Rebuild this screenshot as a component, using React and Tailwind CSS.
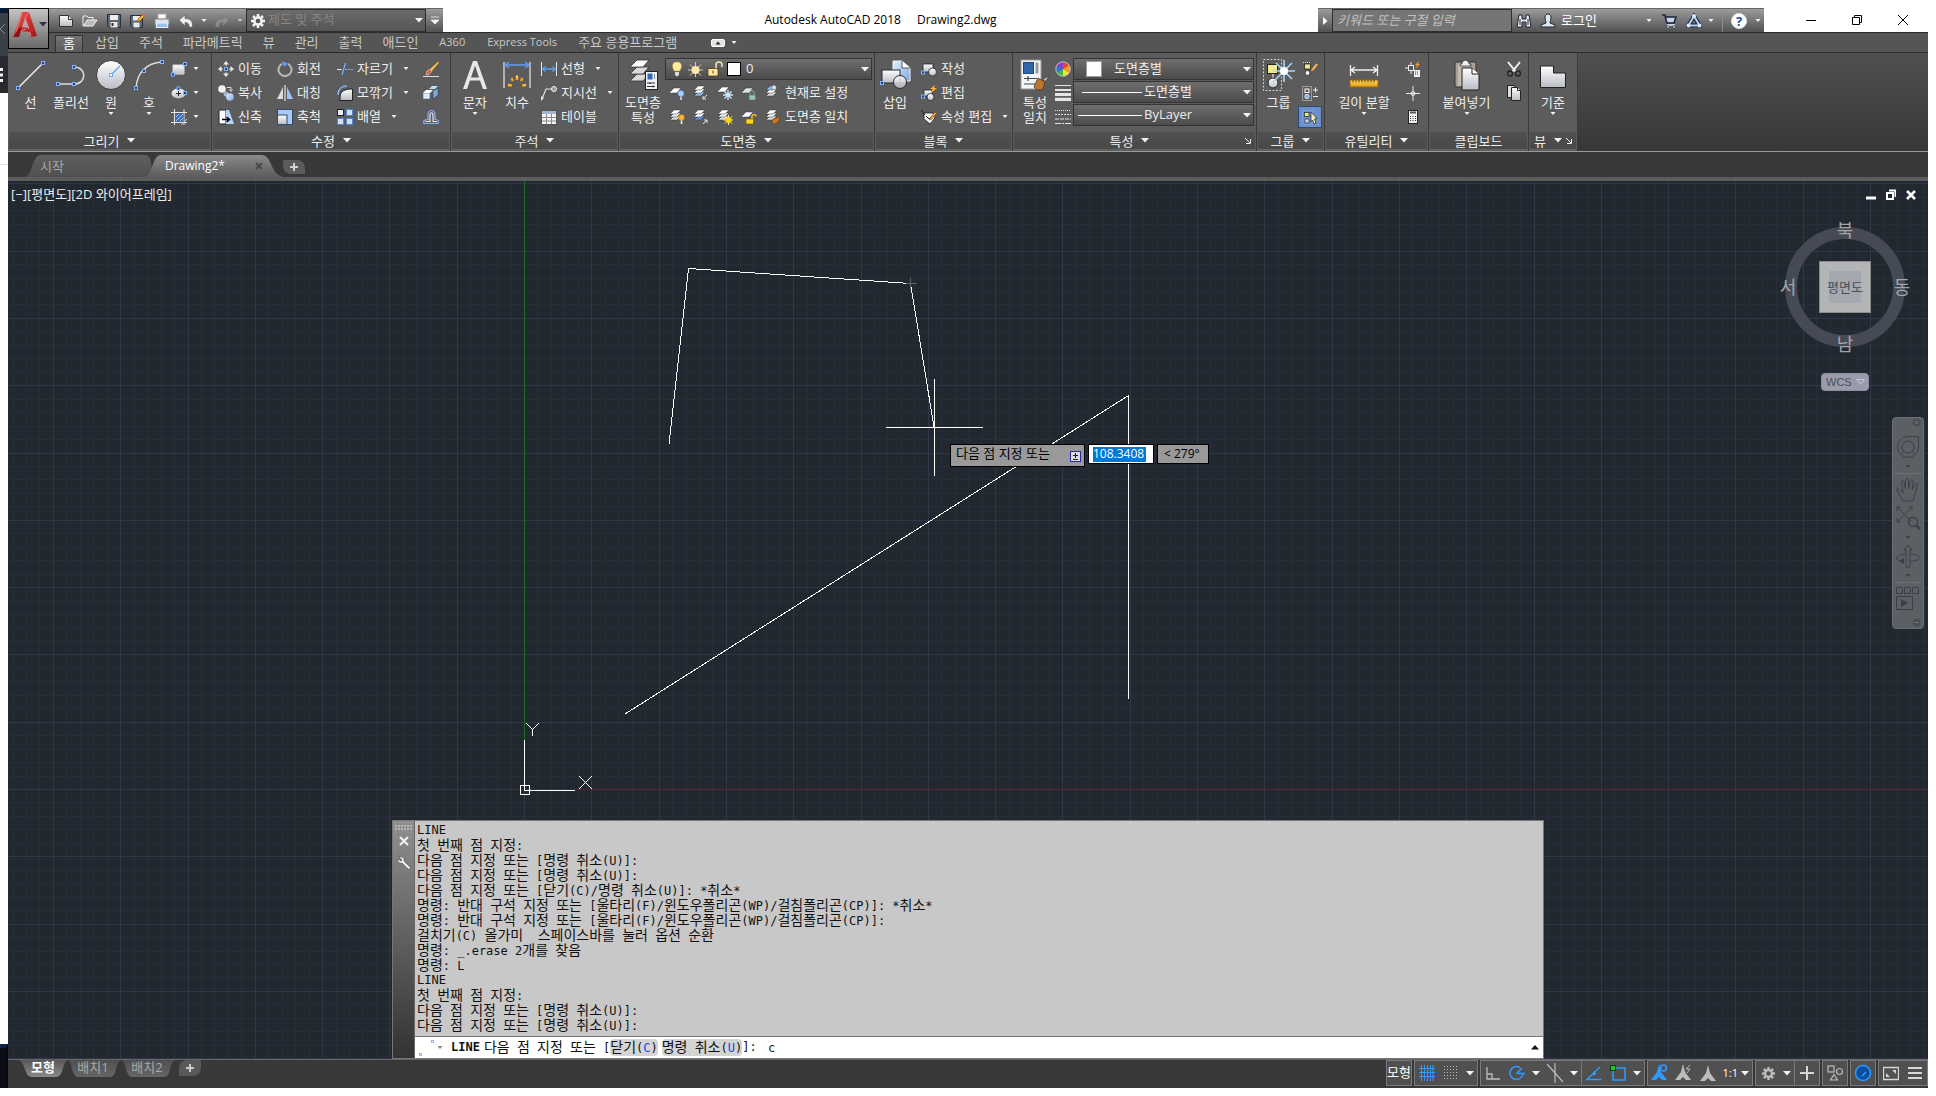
// App.jsx

import { useState } from 'react'

/* ---------- shared drawing bits ---------- */

function Svg({ w = 16, h = w, vb, children }) {
  return (
    <svg width={w} height={h} viewBox={vb || `0 0 ${w} ${h}`} fill="none" aria-hidden="true" className="shrink-0">
      {children}
    </svg>
  )
}

// small blue grip square
function Grip({ x, y }) {
  return <rect x={x - 1.5} y={y - 1.5} width="3" height="3" fill="#27447a" stroke="#84b2ff" />
}

function Caret({ big = false, color = '#f2f2f2' }) {
  return big ? (
    <Svg w={8} h={5}><path d="M0 0h8L4 4.600z" fill={color} /></Svg>
  ) : (
    <Svg w={6} h={4}><path d="M.5 0h5L3 3z" fill={color} /></Svg>
  )
}

// stack of layer sheets, n sheets high
function Sheets({ n = 3, colors = ['#fff', '#f0f0f0', '#dedede'] }) {
  return [...Array(n)].map((_, i) => n - 1 - i).map((i) => (
    <path key={i} d={`M5 ${1 + i * 3}h7l-4 4H1z`} fill={colors[i]} stroke="#333" strokeWidth=".5" />
  ))
}

const Defs = () => (
  <svg width="0" height="0" className="absolute" aria-hidden="true">
    <defs>
      <linearGradient id="silver" x1="0" y1="0" x2="0" y2="1">
        <stop offset="0" stopColor="#fff" />
        <stop offset="1" stopColor="#b9bcc4" />
      </linearGradient>
      <linearGradient id="sky" x1="0" y1="0" x2="1" y2="1">
        <stop offset="0" stopColor="#e3effd" />
        <stop offset="1" stopColor="#7fa9dc" />
      </linearGradient>
      <linearGradient id="red" x1="0" y1="0" x2="1" y2="1">
        <stop offset="0" stopColor="#ef5a50" />
        <stop offset="1" stopColor="#a3141b" />
      </linearGradient>
      <linearGradient id="gold" x1="0" y1="0" x2="0" y2="1">
        <stop offset="0" stopColor="#ffe06a" />
        <stop offset="1" stopColor="#e09a10" />
      </linearGradient>
    </defs>
  </svg>
)

/* ---------- title bar icons ---------- */

const AppLogo = () => (
  <Svg w={24} h={27}>
    <path d="M0 26 9 1h7l8 24-6 1-2-6H8l-2 6z" fill="url(#red)" />
    <path d="M12 7 9 16l7 1z" fill="#a9a9a9" />
    <path d="M9 1 3 22l10-4M16 1l-4 6 6 18" stroke="#ff8a80" strokeWidth=".8" />
    <path d="M8 20l11-3 2 3-5 1z" fill="#c3262a" />
    <path d="M0 26l6-9 3-1-3 10z" fill="#8d1318" />
  </Svg>
)

const QuickIcons = {
  new: <Svg><path d="M1.500 2.500h9l4 4v7h-13z" fill="url(#silver)" stroke="#333" /><path d="M10.500 2.500v4h4" fill="#ddd" stroke="#333" /></Svg>,
  open: <Svg><path d="M1 3h4l1 1.500h5V7" fill="#777" stroke="#f1f1f1" /><path d="M1 13 1 3M1.500 13 5 7h10l-4 6z" fill="#bbb" stroke="#f1f1f1" /></Svg>,
  save: <Svg><path d="M1.500 1.500h13v13h-11l-2-2z" fill="#5d6673" stroke="#25303f" /><rect x="4" y="2" width="8" height="5" fill="#eee" /><rect x="4.500" y="9" width="7" height="5.500" fill="#e8e8e8" /><path d="M5.500 10h2v3h-2z" fill="#333" /></Svg>,
  saveAs: <Svg><path d="M.5 2.500h12v12h-10l-2-2z" fill="#5d6673" stroke="#25303f" /><rect x="3" y="3" width="7" height="4.500" fill="#eee" /><rect x="3.500" y="9.500" width="6" height="5" fill="#e8e8e8" /><path d="m7 9 1-3 5-5 2 2-5 5z" fill="#f7b23c" stroke="#5a3a08" strokeWidth=".6" /><path d="m12 2 2 2 1.500-1.500-2-2z" fill="#e45b4c" /></Svg>,
  print: <Svg><path d="M4 1h8v5H4z" fill="#fff" stroke="#aaa" /><path d="M1 6h14v6H1z" fill="#dfe2e6" stroke="#888" /><path d="M3 10h10l1 4.500H2z" fill="#9cc0ea" stroke="#eef" /></Svg>,
  undo: <Svg><path d="M1 7l6-5v3.500c5 0 8 2 7.500 8.500H11c.3-3-1-4.500-4-4.500V13z" fill="#eceef2" stroke="#444" strokeWidth=".5" /></Svg>,
  redo: <Svg><path d="M15 7 9 2v3.500c-5 0-8 2-7.500 8.500H5c-.3-3 1-4.500 4-4.500V13z" fill="#8c8c8c" stroke="#6b6b6b" strokeWidth=".5" /></Svg>,
}

function Gear({ size = 14, color = '#f1f1f1', hole = '#555' }) {
  return (
    <Svg w={size} vb="0 0 16 16">
      {[0, 45, 90, 135].map((a) => (
        <rect key={a} x="6.500" y="0" width="3" height="16" fill={color} transform={`rotate(${a} 8 8)`} />
      ))}
      <circle cx="8" cy="8" r="5.500" fill={color} />
      <circle cx="8" cy="8" r="2.700" fill={hole} />
    </Svg>
  )
}

const InfoIcons = {
  search: <Svg><path d="M3 2h3v4h4V2h3l2 12h-5V9H6v5H1z" fill="#e7ebf2" stroke="#1d2430" /><path d="M4 6v6M12 6v6" stroke="#1d2430" /></Svg>,
  user: <Svg><path d="M5 4c0-4 6-4 6 0 0 3-1 4-1 6l5 2v2H1v-2l5-2C6 8 5 7 5 4z" fill="#dfe6f2" stroke="#1d2430" /></Svg>,
  cart: <Svg><path d="M1 2h3l1 2h10l-2 6H6L4 3" fill="#c9d6ea" stroke="#16233c" strokeWidth="1.500" /><path d="M6 12h8" stroke="#e8eef7" strokeWidth="1.500" /><circle cx="7" cy="14" r="1.300" fill="#e8eef7" stroke="#16233c" strokeWidth=".6" /><circle cx="13" cy="14" r="1.300" fill="#e8eef7" stroke="#16233c" strokeWidth=".6" /></Svg>,
  a360: <Svg><path d="M8 3 2.500 12.500h11z" stroke="#16233c" strokeWidth="4" /><path d="M8 3 2.500 12.500h11z" stroke="#b9d0f0" strokeWidth="2" /><circle cx="8" cy="3" r="2" fill="#dbe8fa" /><circle cx="2.500" cy="12.500" r="2" fill="#dbe8fa" /><circle cx="13.500" cy="12.500" r="2" fill="#dbe8fa" /></Svg>,
}

/* ---------- ribbon icons ---------- */

const Big = {
  line: <Svg w={32}><path d="M3 29 28 4" stroke="#f0f0f0" strokeWidth="1.500" /><Grip x={3} y={29} /><Grip x={28} y={4} /></Svg>,
  pline: <Svg w={32}><path d="M3 25h16c13 0 13-17 0-17" stroke="#dcdcdc" strokeWidth="1.500" /><Grip x={3} y={25} /><Grip x={19} y={25} /><Grip x={19} y={8} /></Svg>,
  circle: <Svg w={32}><circle cx="16" cy="16" r="14.500" fill="url(#silver)" stroke="#3a3a3a" /><path d="M16 16 25 7" stroke="#6fa4f5" strokeWidth="1.500" /><rect x="14.500" y="14.500" width="3" height="3" fill="#fff" stroke="#6fa4f5" /></Svg>,
  arc: <Svg w={32}><path d="M3 29C4 14 13 4 29 3" stroke="#dcdcdc" strokeWidth="1.500" /><Grip x={3} y={29} /><Grip x={11} y={12} /><Grip x={29} y={3} /></Svg>,
  text: <Svg w={32}><path d="M4 30 14 2h4l10 28h-4l-3-8.500H11L8 30zM12 18.500h8L16 6.500z" fill="#e8e8e8" fillRule="evenodd" /></Svg>,
  dim: (
    <Svg w={32}>
      <path d="M3 3v26M29 3v26" stroke="#e8e8e8" strokeWidth="1.200" />
      <path d="M4 6h24M8 3 4 6l4 3M24 3l4 3-4 3" stroke="#5e9cf5" strokeWidth="1.500" />
      <path d="M16 17v4M10.500 19l1.500 3M21.500 19l-1.500 3M7 26l4 .5M25 26l-4 .5" stroke="#f4a21c" strokeWidth="2.500" />
      <path d="M16 16.500v2M7.500 26h1M24.500 26h-1" stroke="#ffe37a" strokeWidth="2" />
    </Svg>
  ),
  layers: (
    <Svg w={32}>
      {[15, 8, 1].map((y) => (
        <path key={y} d={`M10 ${y}h12l-6 7H3z`} fill={y === 1 ? '#fff' : '#d9d9d9'} stroke="#333" strokeWidth=".8" />
      ))}
      <rect x="18.500" y="12.500" width="12" height="18" fill="#eef1f5" stroke="#222" />
      <rect x="20.500" y="14.500" width="5" height="6" fill="#2e6cc0" />
      <path d="M27.500 15v5" stroke="#888" /><path d="M20 24h8M23 23v2M20 27.500h8M26 26.500v2" stroke="#333" />
    </Svg>
  ),
  insert: (
    <Svg w={32}>
      <path d="M14 2h9l8 7v13H14z" fill="url(#sky)" stroke="#eef4fb" /><path d="M23 2v7h8" fill="#fff" stroke="#333" strokeWidth=".8" />
      <rect x="3" y="11" width="18" height="13" fill="url(#silver)" stroke="#2b2b2b" />
      <circle cx="21" cy="23" r="6.500" fill="url(#silver)" stroke="#2b2b2b" fillOpacity=".85" /><Grip x={3} y={24} />
    </Svg>
  ),
  match: (
    <Svg w={32}>
      <rect x="2" y="1" width="20" height="29" fill="#f3f5f8" stroke="#999" /><rect x="4.500" y="3.500" width="10" height="11" fill="#2f68a8" stroke="#20456f" />
      <rect x="16.500" y="3.500" width="3" height="11" fill="#9b9b9b" /><path d="M5 19.500h13M9 17v5M5 25h13" stroke="#444" strokeWidth="1.200" />
      <path d="M30 17l-6 3 2 3z" fill="#c9c9c9" stroke="#333" strokeWidth=".6" /><path d="M19 19l7 4-2 7c-4 2-8 0-9-2z" fill="#b8772a" stroke="#4a2b07" strokeWidth=".7" />
    </Svg>
  ),
  group: (
    <Svg w={36} h={34}>
      <rect x="2.500" y="1.500" width="18" height="31" stroke="#cfcfcf" strokeDasharray="2 1.500" />
      <path d="M12 12v12" stroke="#fff" /><rect x="6.500" y="6.500" width="10" height="9" fill="#f3ea8c" stroke="#222" />
      <circle cx="12" cy="25" r="5" fill="url(#silver)" stroke="#222" />
      <path d="M23 2v22M12 13h22M15 5l16 16M31 5 12 24" stroke="#a9d6fb" strokeWidth="1.600" />
      <circle cx="23" cy="13" r="4" fill="#fff" />
    </Svg>
  ),
  measure: (
    <Svg w={32}>
      <path d="M2.500 6v11M29.500 6v11M3 11h26M7 8l-4 3 4 3M25 8l4 3-4 3" stroke="#f0f0f0" strokeWidth="1.300" />
      <rect x="2" y="21" width="28" height="7" fill="url(#gold)" stroke="#9c6407" />
      <path d="M5 21v2.500M8 21v2.500M11 21v2.500M14 21v2.500M17 21v2.500M20 21v2.500M23 21v2.500M26 21v2.500" stroke="#6b4504" />
    </Svg>
  ),
  paste: (
    <Svg w={32}>
      <rect x="4" y="3" width="21" height="25" rx="1" fill="#a99f95" stroke="#3b342e" /><rect x="7" y="5" width="12" height="22" fill="#c5bcb3" />
      <path d="M9 5h2c0-5 7-5 7 0h2v2H9z" fill="#f1f1f1" stroke="#333" strokeWidth=".8" />
      <path d="M11 9h10l7 6v16H11z" fill="url(#silver)" stroke="#222" /><path d="M21 9v6h7" fill="#fff" stroke="#222" />
    </Svg>
  ),
  base: <Svg w={32}><path d="M3.500 7h13v7h12v14.500h-25z" fill="url(#silver)" stroke="#222" /></Svg>,
}

const I = {
  rect: <Svg><path d="M2 4h11v9H2z" fill="url(#silver)" stroke="#ddd" /><Grip x={2} y={13.500} /><Grip x={14} y={3} /></Svg>,
  ellipse: <Svg><ellipse cx="7.500" cy="8.500" rx="7" ry="5" fill="url(#silver)" /><path d="M7.500 6v5M5 8.500h5" stroke="#222" /><Grip x={7.500} y={3.500} /><Grip x={14} y={8} /></Svg>,
  hatch: <Svg><path d="M0 3.500h16M0 13.500h16M3.500 0v16M13 0v16" stroke="#e6e6e6" /><rect x="4.500" y="4.500" width="8" height="8" fill="#3f6fb8" /><path d="m5 12 7-7M5 8l3-3M9 12l3-3M10 16l6-6" stroke="#a9c9f7" /></Svg>,
  move: <Svg><path d="m8 0 3 3.500H5zM8 16l3-3.500H5zM0 8l3.500-3v6zM16 8l-3.500-3v6z" fill="#e8e8e8" /><path d="M8 3v2M8 11v2M3 8h2M11 8h2" stroke="#e8e8e8" /><Grip x={8} y={8} /></Svg>,
  copy: <Svg><circle cx="4" cy="4" r="3.800" fill="#f2f2f2" /><circle cx="8" cy="9" r="2.500" fill="#a8b6cb" /><circle cx="12" cy="12" r="3.800" fill="url(#sky)" /><path d="M9 2.500h4v3M11.500 4.500 13 6.500l1.500-2" stroke="#ddd" /></Svg>,
  stretch: <Svg><path d="M1 1h7v14H1z" fill="#fff" stroke="#222" /><path d="M8 1h3l5 14H8z" fill="#b5d3f6" /><path d="M4 10.500h7M8.500 8l3 2.500-3 2.500" stroke="#000" strokeWidth="1.500" /></Svg>,
  rotate: <Svg><path d="M11 2.800A6.500 6.500 0 1 1 5 2.800" stroke="#b8b8b8" strokeWidth="2" /><path d="M5 0l6 2.500L7 6z" fill="#5e9cf5" /></Svg>,
  mirror: <Svg><path d="M6 2v12H0z" fill="#d8dbe0" /><path d="M10 2v12h6z" fill="#9cc3f3" /><path d="M8 0v16" stroke="#fff" /></Svg>,
  scale: <Svg><rect x=".5" y=".5" width="15" height="15" fill="#a9cbf5" stroke="#31486a" /><rect x=".5" y="6" width="9.500" height="9.500" fill="url(#silver)" stroke="#31486a" /></Svg>,
  trim: <Svg><path d="M0 8.500h5M8.500 2 5 14" stroke="#7db1ff" strokeWidth="1.200" /><path d="M0 8.500h4" stroke="#eee" /><path d="M8 8.500h8" stroke="#7db1ff" strokeDasharray="2 1" /></Svg>,
  fillet: <Svg><path d="M3 15.500V12C3 6 8 4 15.500 4v11.500z" fill="url(#silver)" stroke="#222" /><path d="M1 10C1 4 5 1 10 1" stroke="#84b2ff" strokeWidth="1.500" /></Svg>,
  array: <Svg><rect x=".5" y=".5" width="6" height="6" fill="#eee" stroke="#222" /><path d="M9.500.5h6v6h-6zM.5 9.500h6v6h-6zM9.500 9.500h6v6h-6z" fill="#cfe2fb" stroke="#4e86d6" /></Svg>,
  erase: <Svg><path d="M15.500 0 16 2 9 10 7 8z" fill="#f4c95d" stroke="#7b4c0b" strokeWidth=".5" /><path d="M7 8l2 2-3 3.500-3 .5 1-4z" fill="#d8642c" stroke="#fff" strokeWidth=".5" /><path d="M0 15.500h16" stroke="#ddd" /></Svg>,
  explode: <Svg><path d="M0 8h7v6H0z" fill="#dcebfb" stroke="#567" strokeWidth=".6" /><path d="m0 8 3-3h7L7 8z" fill="#fff" /><path d="M10 6l5-3v7l-5 4z" fill="#7fa9dc" stroke="#345" strokeWidth=".6" /><path d="m6 4 3-3h6l-3 3z" fill="#c6dcf6" /></Svg>,
  offset: <Svg><path d="M1 14.500c-1-2 0-4 4-4V6c0-6 7-6 7 0v4.500c4 0 4 2 3 4z" stroke="#84b2ff" strokeWidth="1.200" /><path d="M2.500 12.500H7V6c0-3 3-3 3 0v6.500h4" stroke="#e8e8e8" strokeWidth="1.200" /></Svg>,
  linear: <Svg><path d="M.5 1v14M15.500 1v14" stroke="#e8e8e8" /><path d="M1.500 8h13M4.500 5.500 1.500 8l3 2.500M11.500 5.500l3 2.500-3 2.500" stroke="#5e9cf5" strokeWidth="1.300" /></Svg>,
  leader: <Svg><path d="M1 14 5 4h7" stroke="#e0e0e0" strokeWidth="1.200" /><path d="M0 16V11l3 2z" fill="#e0e0e0" /><circle cx="13" cy="4" r="2.500" fill="#999" stroke="#f1f1f1" /></Svg>,
  table: <Svg><rect x=".5" y="1.500" width="15" height="14" fill="#f4f4f4" stroke="#555" /><path d="M1 2h14v3H1z" fill="#9fb4d0" /><path d="M1 8.500h14M1 12h14M5.500 5v10M10.500 5v10" stroke="#8a8a8a" /></Svg>,
  layOff: <Svg><path d="M5 3h7L8 8H0z" fill="#fff" stroke="#333" strokeWidth=".5" /><circle cx="12" cy="8.500" r="3" fill="#a9d3fb" stroke="#4b86c4" strokeWidth=".6" /><path d="M12 11.500V15" stroke="#cfe6fd" strokeWidth="1.500" /></Svg>,
  layIso: <Svg><Sheets colors={['#fff', '#fff', '#8fc0f5']} /><path d="m14 10-4 4M10 11v3h3" stroke="#e8e8e8" /></Svg>,
  layFreeze: <Svg><path d="M5 2h7L8 7H0z" fill="#fff" stroke="#333" strokeWidth=".5" /><path d="M11 5v10M6 10h10M7.500 6.500l7 7M14.500 6.500l-7 7" stroke="#cfe6fd" strokeWidth="1.300" /></Svg>,
  layLock: <Svg><path d="M5 3h7L8 8H0z" fill="#dbe5e6" stroke="#333" strokeWidth=".5" /><path d="M9 10V7.500c0-2.500 4-2.500 4 0V10" stroke="#8fb3b3" /><rect x="8" y="10" width="6.500" height="5" fill="#9fc0bf" stroke="#496b6b" strokeWidth=".6" /></Svg>,
  layCurrent: <Svg><Sheets colors={['#8fc0f5', '#fff', '#dcdcdc']} /><circle cx="9" cy="2.500" r="2.500" fill="#ddd" stroke="#444" strokeWidth=".5" /></Svg>,
  layOn: <Svg><Sheets /><circle cx="12.500" cy="8.500" r="3" fill="#ffb23a" stroke="#b36b00" strokeWidth=".6" /><path d="M12.500 11.500V15" stroke="#fff" strokeWidth="1.500" /></Svg>,
  layUniso: <Svg><Sheets colors={['#fff', '#fff', '#5d8fe8']} /><path d="m10 15 4-4M11 11h3v3" stroke="#e8e8e8" /></Svg>,
  layThaw: <Svg><Sheets /><path d="M11.500 6v10M6.500 11h10M8 7.500l7 7M15 7.500l-7 7" stroke="#fff3a0" /><circle cx="11.500" cy="11" r="3" fill="#f7d51c" /></Svg>,
  layUnlock: <Svg><path d="M5 3h7L8 8H0z" fill="#fff" stroke="#333" strokeWidth=".5" /><path d="M11 10V7.500c0-2.500 4-2.500 4 0" stroke="#f7d51c" strokeWidth="1.300" /><rect x="5" y="10" width="7.500" height="5" fill="#f7d51c" stroke="#6b5300" strokeWidth=".6" /></Svg>,
  layMatch: <Svg><Sheets /><path d="m8 10 4-1 3-3-1 5-3 4c-2 0-4-1-4-3z" fill="#c9772a" stroke="#5b3108" strokeWidth=".5" /></Svg>,
  blkCreate: <Svg><rect x="2" y="3" width="10" height="8" fill="url(#silver)" stroke="#222" strokeWidth=".8" /><circle cx="11.500" cy="11" r="4" fill="url(#silver)" stroke="#222" strokeWidth=".8" /><Grip x={2} y={11.500} /></Svg>,
  blkEdit: <Svg><rect x="3" y="5" width="8" height="6" fill="url(#silver)" stroke="#222" strokeWidth=".8" /><circle cx="9.500" cy="12" r="3.500" fill="url(#silver)" stroke="#222" strokeWidth=".8" /><Grip x={2} y={11.500} /><path d="m14 0-5 4h2.500L10 8l6-5h-3z" fill="#ffb52e" /></Svg>,
  blkAttr: <Svg><path d="m3 4 9 0 2 5-5 6-6-5z" fill="#f2f2f2" stroke="#222" strokeWidth=".8" /><path d="M0 1l4 5M5 7l3 3 3-3" stroke="#222" /><path d="m9 9 5-6 1.500 1.500L11 10l-2.500 1z" fill="#f4a43c" stroke="#5a3a08" strokeWidth=".5" /></Svg>,
  wheel: (
    <Svg>
      {['#e8452f', '#f29a1f', '#f5e12f', '#43b649', '#2f73d8', '#8a3fc4'].map((c, i) => (
        <path key={c} d="M8 8V1a7 7 0 0 1 6.060 3.500z" fill={c} transform={`rotate(${i * 60} 8 8)`} />
      ))}
      <circle cx="8" cy="8" r="7.200" stroke="#ddd" strokeWidth=".8" />
    </Svg>
  ),
  weights: <Svg><path d="M0 .5h16" stroke="#e4e4e4" /><path d="M0 5h16" stroke="#e4e4e4" strokeWidth="2" /><path d="M0 9.500h16" stroke="#e4e4e4" strokeWidth="3" /><path d="M0 14.500h16" stroke="#e4e4e4" strokeWidth="3.500" /></Svg>,
  types: <Svg><path d="M0 1.500h16" stroke="#e4e4e4" strokeDasharray="1 1" /><path d="M0 5.500h16" stroke="#e4e4e4" strokeDasharray="2 1" /><path d="M0 10h16" stroke="#e4e4e4" strokeDasharray="4 1" /><path d="M0 14.500h16" stroke="#e4e4e4" strokeDasharray="6 1 2 1" /></Svg>,
  grpEdit: <Svg><path d="M1 1.500h8" stroke="#ddd" strokeDasharray="1 1" /><rect x="2.500" y="3" width="6" height="5" fill="#f3ea8c" stroke="#222" strokeWidth=".8" /><circle cx="5.500" cy="12" r="2.500" fill="#eee" stroke="#222" strokeWidth=".8" /><path d="m9 9 5-6.500 2 1L11 10z" fill="#f0b64a" /><path d="m8.500 10.500.5-2L11 10z" fill="#e4573f" /></Svg>,
  grpAdd: <Svg><rect x=".5" y="1.500" width="9" height="14" stroke="#ddd" strokeDasharray="1 1" /><rect x="3" y="4" width="4" height="3.500" stroke="#fff" /><circle cx="5" cy="11.500" r="2.200" fill="#7fb3f5" stroke="#fff" strokeWidth=".7" /><path d="M11 5h5M13.500 2.500v5M11 11.500h5" stroke="#eee" /></Svg>,
  grpPick: <Svg><rect x=".5" y="1.500" width="10" height="14" stroke="#7fb3f5" strokeDasharray="1 1" /><rect x="2.500" y="3.500" width="4.500" height="4" fill="#f3ea8c" stroke="#222" strokeWidth=".7" /><circle cx="5" cy="12" r="2.300" fill="#ccd6e6" stroke="#222" strokeWidth=".7" /><path d="m9 3 6 6.500-2.500.500 1.500 4-2 .7L10.500 11 9 12.500z" fill="#f5efad" stroke="#222" strokeWidth=".7" /></Svg>,
  quickSel: <Svg><path d="M0 7h9M6 1v12" stroke="#eee" /><rect x="3.500" y="4.500" width="5" height="5" fill="#555" stroke="#eee" /><path d="m14 0-4 4h2l-2 4 5-5h-2z" fill="#f59a1f" /><path d="M9 9h6v7H9z" fill="#f0f0f0" /><path d="M10 11h4M10 13h4" stroke="#333" strokeDasharray="1 1" /></Svg>,
  point: <Svg><path d="M8 1v15M1 8.500h14" stroke="#e8e8e8" /><circle cx="8" cy="8.500" r="2" stroke="#e8e8e8" /></Svg>,
  calc: <Svg><rect x="3.500" y="1.500" width="9" height="13" fill="#f1f1f1" stroke="#222" /><path d="M5 3.500h6" stroke="#555" strokeWidth="2" /><path d="M5 7.500h6M5 9.500h6M5 11.500h6" stroke="#333" strokeDasharray="1 1.500" /></Svg>,
  cut: <Svg><path d="m2 1 8 10M14 1 6 11" stroke="#f2f2f2" strokeWidth="2" /><circle cx="4" cy="12.500" r="2.500" stroke="#222" strokeWidth="1.300" /><circle cx="12" cy="12.500" r="2.500" stroke="#222" strokeWidth="1.300" /></Svg>,
  copyClip: <Svg><path d="M1.500.5h7v12h-7z" fill="#ddd" stroke="#222" /><path d="M5.500 2.500h6l3 3v10h-9z" fill="url(#silver)" stroke="#222" /><path d="M11.500 2.500v3h3" fill="#fff" stroke="#222" /></Svg>,
}

/* ---------- controls ---------- */

function LargeButton({ icon, lines, width, arrow = false }) {
  return (
    <button type="button" className={`flex flex-col items-center self-start ${width}`}>
      <span className="flex h-9 items-center justify-center">{icon}</span>
      <span className="mt-0.5 whitespace-nowrap text-[13px] leading-[15px]">
        {lines.map((line) => (
          <span key={line} className="block">{line}</span>
        ))}
      </span>
      {arrow && <span className="mt-0.5"><Caret /></span>}
    </button>
  )
}

function SmallButton({ icon, label, title, arrow = false, width = '', active = false }) {
  return (
    <button
      type="button"
      aria-label={label || title}
      aria-pressed={active || undefined}
      className={`flex h-6 items-center text-[13px] leading-[15px] whitespace-nowrap ${width}`}
    >
      <span className={`flex w-6 shrink-0 items-center justify-center ${active ? 'h-[22px] border border-[#2c4a78] bg-[#6c8fc7]' : 'h-6'}`}>
        {icon}
      </span>
      {label && <span className="pb-0.5">{label}</span>}
      {arrow && <span className={label ? 'ml-2.5' : 'mx-0.5'}><Caret /></span>}
    </button>
  )
}

function Combo({ label, options, pad, children }) {
  return (
    <span className="relative my-px block h-[22px] border border-[#333] bg-linear-to-b from-[#6e6e6e] to-[#4c4c4c]">
      <select aria-label={label} className={`block h-5 w-full appearance-none bg-transparent pb-0.5 text-[13px] leading-[18px] outline-none ${pad}`}>
        {options.map((o) => (
          <option key={o}>{o}</option>
        ))}
      </select>
      <span className="pointer-events-none absolute inset-y-0 left-0 flex items-center">{children}</span>
      <span className="pointer-events-none absolute inset-y-0 right-0.5 flex items-center"><Caret big /></span>
    </span>
  )
}

function Panel({ title, width, arrow = true, launcher = false, children }) {
  return (
    <section aria-label={title} className={`flex shrink-0 flex-col border-r border-[#3a3a3a] bg-[#5c5c5c] ${width}`}>
      <div className="flex h-[79px] px-0.5 pt-1">{children}</div>
      <div className="mx-px flex h-[18px] items-center border-b border-[#646464] bg-linear-to-b from-[#505050] to-[#494949]">
        <button type="button" className="flex flex-1 items-center justify-center gap-2 text-[13px] leading-4">
          {title}
          {arrow && <Caret big />}
        </button>
        {launcher && (
          <button type="button" aria-label={`${title} 설정`} className="mr-1">
            <Svg w={6}><path d="M0 0l5 5M5.500 1v4.500H1" stroke="#eee" /></Svg>
          </button>
        )}
      </div>
    </section>
  )
}

/* ---------- top of the window ---------- */

function QuickAccess() {
  const items = [
    ['new', '새로 만들기'],
    ['open', '열기'],
    ['save', '저장'],
    ['saveAs', '다른 이름으로 저장'],
    ['print', '플롯'],
    ['undo', '명령 취소'],
  ]
  return (
    <div className="flex w-[394px] shrink-0 items-stretch border-t border-[#666] bg-linear-to-b from-[#9c9c9c] to-[#525252] pl-[5px]">
      {items.map(([key, label]) => (
        <button key={key} type="button" aria-label={label} className="flex w-6 items-center justify-center">
          {QuickIcons[key]}
        </button>
      ))}
      <button type="button" aria-label="명령 취소 목록" className="flex w-3 items-center justify-center"><Caret /></button>
      <button type="button" aria-label="명령 복구" className="flex w-6 items-center justify-center">{QuickIcons.redo}</button>
      <button type="button" aria-label="명령 복구 목록" className="flex w-3 items-center justify-center"><Caret color="#c4c4c4" /></button>
      <span className="relative block w-[180px] border border-[#2d2d2d] bg-linear-to-b from-[#6b6b6b] to-[#555]">
        <select aria-label="작업공간" className="block h-[21px] w-full appearance-none bg-transparent pb-0.5 pl-[21px] text-[13px] leading-[19px] text-[#868686] outline-none">
          <option>제도 및 주석</option>
        </select>
        <span className="pointer-events-none absolute inset-y-0 left-1 flex items-center"><Gear /></span>
        <span className="pointer-events-none absolute inset-y-0 right-0.5 flex items-center"><Caret big /></span>
      </span>
      <button type="button" aria-label="신속 접근 도구막대 사용자화" className="flex flex-1 items-center justify-center">
        <Svg w={8} h={9}><path d="M0 1h8M0 4h8L4 8z" fill="#f2f2f2" stroke="#f2f2f2" strokeWidth=".8" /></Svg>
      </button>
    </div>
  )
}

function InfoCenter() {
  return (
    <div className="flex w-[446px] shrink-0 items-stretch border-t border-[#666] bg-linear-to-b from-[#9c9c9c] to-[#525252] text-[13px] text-white">
      <button type="button" aria-label="검색 접기" className="flex w-3.5 items-center justify-center">
        <Svg w={5} h={8}><path d="M0 0v8l4.500-4z" fill="#fff" /></Svg>
      </button>
      <input
        type="text"
        aria-label="검색"
        placeholder="키워드 또는 구절 입력"
        className="w-[180px] border border-[#2d2d2d] bg-[#757575] px-1 pb-0.5 text-[13px] leading-[18px] italic outline-none placeholder:text-[#c0c0c0]"
      />
      <button type="button" aria-label="찾기" className="flex w-6 items-center justify-center">{InfoIcons.search}</button>
      <button type="button" className="flex w-[120px] items-center">
        <span className="flex w-6 justify-center">{InfoIcons.user}</span>
        <span className="pl-px">로그인</span>
        <span className="ml-auto flex w-3.5 justify-center"><Caret /></span>
      </button>
      <button type="button" aria-label="App Store" className="flex w-[26px] items-center justify-center">{InfoIcons.cart}</button>
      <button type="button" aria-label="A360 연결" className="flex w-8 items-center pl-1">{InfoIcons.a360}<span className="ml-1.5"><Caret /></span></button>
      <button type="button" aria-label="도움말" className="ml-2 flex flex-1 items-center border-l border-[#8b8b8b] pl-2">
        <span className="flex size-4 items-center justify-center rounded-full border border-[#dfe6f2] bg-white text-[13px] leading-4 font-bold text-[#1d4fa0]">?</span>
        <span className="ml-2"><Caret /></span>
      </button>
    </div>
  )
}

function WindowButtons() {
  return (
    <div className="flex w-[164px] shrink-0 justify-end bg-white pr-0.5">
      <button type="button" aria-label="최소화" className="flex w-[46px] items-center justify-center">
        <Svg w={10}><path d="M0 5.500h10" stroke="#000" /></Svg>
      </button>
      <button type="button" aria-label="이전 크기로 복원" className="flex w-[46px] items-center justify-center">
        <Svg w={10}><path d="M.5 2.500h7v7h-7zM2.500 2.500v-2h7v7h-2" stroke="#000" /></Svg>
      </button>
      <button type="button" aria-label="닫기" className="flex w-[46px] items-center justify-center">
        <Svg w={10}><path d="m0 0 10 10M10 0 0 10" stroke="#000" /></Svg>
      </button>
    </div>
  )
}

const RIBBON_TABS = ['삽입', '주석', '파라메트릭', '뷰', '관리', '출력', '애드인', 'A360', 'Express Tools', '주요 응용프로그램']

function Header() {
  return (
    <header className="flex h-11 shrink-0 bg-[#555]">
      <button type="button" aria-label="응용프로그램 메뉴" className="flex h-[41px] w-[41px] shrink-0 items-center gap-0.5 border border-black bg-linear-to-b from-[#c4c4c4] to-[#6a6a6a] pb-2 pl-1">
        <AppLogo />
        <Caret big color="#2b3340" />
      </button>
      <div className="flex min-w-0 flex-1 flex-col">
        <div className="flex h-6 bg-white">
          <QuickAccess />
          <h1 className="flex flex-1 items-center justify-center gap-4 text-xs text-black">
            <span>Autodesk AutoCAD 2018</span>
            <span>Drawing2.dwg</span>
          </h1>
          <InfoCenter />
          <WindowButtons />
        </div>
        <nav className="flex h-5 items-end border-t border-[#2b2b2b] pl-1.5 text-[13px] leading-4 text-[#c8c8c8]">
          <button type="button" className="mr-0.5 h-[17px] w-7 border border-b-0 border-[#333] bg-linear-to-b from-[#747474] to-[#5c5c5c] pb-0.5 leading-[14px] text-white">
            홈
          </button>
          {RIBBON_TABS.map((tab) => (
            <button key={tab} type="button" className={`h-[18px] pb-0.5 whitespace-nowrap ${/^[A-Z]/.test(tab) ? 'px-[11px] text-[11px]' : 'px-2.5'}`}>
              {tab}
            </button>
          ))}
          <button type="button" aria-label="리본 최소화" className="ml-6 flex h-[18px] items-center gap-1.5">
            <Svg w={14} h={8}><rect x=".5" y=".5" width="13" height="7" rx="1.500" fill="#e4e4e4" stroke="#fff" /><path d="M4.500 5.500h5L7 2.500z" fill="#222" /></Svg>
            <Caret />
          </button>
        </nav>
      </div>
    </header>
  )
}

function Ribbon() {
  return (
    <div className="flex h-[100px] shrink-0 border-y border-t-[#2b2b2b] border-b-[#9a9a9a] bg-linear-to-b from-[#505050] to-[#373737] text-[#eee]">
      <Panel title="그리기" width="w-[204px]">
        <LargeButton icon={Big.line} lines={['선']} width="w-[41px]" />
        <LargeButton icon={Big.pline} lines={['폴리선']} width="w-10" />
        <LargeButton icon={Big.circle} lines={['원']} width="w-10" arrow />
        <LargeButton icon={Big.arc} lines={['호']} width="w-9" arrow />
        <div>
          <SmallButton icon={I.rect} title="직사각형" arrow />
          <SmallButton icon={I.ellipse} title="타원" arrow />
          <SmallButton icon={I.hatch} title="해치" arrow />
        </div>
      </Panel>

      <Panel title="수정" width="w-[239px]">
        <div className="grid grid-cols-[59px_60px_86px_24px] content-start">
          <SmallButton icon={I.move} label="이동" />
          <SmallButton icon={I.rotate} label="회전" />
          <SmallButton icon={I.trim} label="자르기" arrow />
          <SmallButton icon={I.erase} title="지우기" />
          <SmallButton icon={I.copy} label="복사" />
          <SmallButton icon={I.mirror} label="대칭" />
          <SmallButton icon={I.fillet} label="모깎기" arrow />
          <SmallButton icon={I.explode} title="분해" />
          <SmallButton icon={I.stretch} label="신축" />
          <SmallButton icon={I.scale} label="축척" />
          <SmallButton icon={I.array} label="배열" arrow />
          <SmallButton icon={I.offset} title="간격띄우기" />
        </div>
      </Panel>

      <Panel title="주석" width="w-[168px]">
        <LargeButton icon={Big.text} lines={['문자']} width="w-11" arrow />
        <LargeButton icon={Big.dim} lines={['치수']} width="w-10" />
        <div>
          <SmallButton icon={I.linear} label="선형" arrow />
          <SmallButton icon={I.leader} label="지시선" arrow />
          <SmallButton icon={I.table} label="테이블" />
        </div>
      </Panel>

      <Panel title="도면층" width="w-[256px]">
        <LargeButton icon={Big.layers} lines={['도면층', '특성']} width="w-11" />
        <div className="flex-1">
          <Combo label="도면층" options={['0']} pad="pl-20">
            <span className="flex items-center gap-1 pl-1">
              <Svg w={14} h={16}><path d="M7 1c6 0 5 6 2.500 9h-5C2 7 1 1 7 1z" fill="#ffeb9c" stroke="#c9a63a" strokeWidth=".5" /><path d="M5 11h4v3l-2 1.500L5 14z" fill="#dcdcdc" /></Svg>
              <Svg w={15}><path d="M7.500 0v15M0 8h15M2 2.500l11 11M13 2.500l-11 11" stroke="#d8cfae" /><circle cx="7.500" cy="8" r="4" fill="#ffe9ab" /></Svg>
              <Svg w={16}><path d="M9 8V4c0-4 6-4 6 0v2" stroke="#f3e6b3" strokeWidth="1.500" /><rect x="1" y="7.500" width="10" height="7.500" fill="#ffe9a0" stroke="#4d4010" strokeWidth=".8" /><path d="M6 9.500v3" stroke="#4d4010" /></Svg>
              <span className="size-3.5 border border-black bg-white" />
            </span>
          </Combo>
          <div className="flex">
            <SmallButton icon={I.layOff} title="끄기" />
            <SmallButton icon={I.layIso} title="분리" />
            <SmallButton icon={I.layFreeze} title="동결" />
            <SmallButton icon={I.layLock} title="잠금" />
            <SmallButton icon={I.layCurrent} label="현재로 설정" />
          </div>
          <div className="flex">
            <SmallButton icon={I.layOn} title="모든 도면층 켜기" />
            <SmallButton icon={I.layUniso} title="분리 해제" />
            <SmallButton icon={I.layThaw} title="모든 도면층 동결 해제" />
            <SmallButton icon={I.layUnlock} title="잠금 해제" />
            <SmallButton icon={I.layMatch} label="도면층 일치" />
          </div>
        </div>
      </Panel>

      <Panel title="블록" width="w-[138px]">
        <LargeButton icon={Big.insert} lines={['삽입']} width="w-9" />
        <div className="ml-1">
          <SmallButton icon={I.blkCreate} label="작성" />
          <SmallButton icon={I.blkEdit} label="편집" />
          <SmallButton icon={I.blkAttr} label="속성 편집" arrow />
        </div>
      </Panel>

      <Panel title="특성" width="w-[244px]" launcher>
        <LargeButton icon={Big.match} lines={['특성', '일치']} width="w-10" />
        <div className="flex w-4 flex-col items-center">
          <span className="flex h-6 items-center">{I.wheel}</span>
          <span className="flex h-6 items-center">{I.weights}</span>
          <span className="flex h-6 items-center">{I.types}</span>
        </div>
        <div className="ml-0.5 flex-1">
          <Combo label="객체 색상" options={['도면층별']} pad="pl-10">
            <span className="ml-3 size-4 border border-[#999] bg-white" />
          </Combo>
          <Combo label="선가중치" options={['도면층별']} pad="pl-[70px]">
            <span className="ml-2 h-px w-[60px] bg-white" />
          </Combo>
          <Combo label="선종류" options={['ByLayer']} pad="pl-[70px]">
            <span className="ml-1 h-px w-16 bg-white" />
          </Combo>
        </div>
      </Panel>

      <Panel title="그룹" width="w-[68px]">
        <LargeButton icon={Big.group} lines={['그룹']} width="w-10" />
        <div>
          <SmallButton icon={I.grpEdit} title="그룹 편집" />
          <SmallButton icon={I.grpAdd} title="그룹에서 추가/제거" />
          <SmallButton icon={I.grpPick} title="그룹 선택 켜기/끄기" active />
        </div>
      </Panel>

      <Panel title="유틸리티" width="w-[104px]">
        <LargeButton icon={Big.measure} lines={['길이 분할']} width="w-[74px]" arrow />
        <div>
          <SmallButton icon={I.quickSel} title="신속 선택" />
          <SmallButton icon={I.point} title="ID 점" />
          <SmallButton icon={I.calc} title="계산기" />
        </div>
      </Panel>

      <Panel title="클립보드" width="w-[100px]" arrow={false}>
        <LargeButton icon={Big.paste} lines={['붙여넣기']} width="w-[71px]" arrow />
        <div>
          <SmallButton icon={I.cut} title="잘라내기" />
          <SmallButton icon={I.copyClip} title="복사하기" />
        </div>
      </Panel>

      <Panel title="뷰" width="w-[49px]" launcher>
        <LargeButton icon={Big.base} lines={['기준']} width="w-11" arrow />
      </Panel>
    </div>
  )
}

function FileTabs() {
  return (
    <div className="flex h-[29px] shrink-0 items-end border-b-4 border-[#5c5c5c] bg-[#383838] pl-[17px]">
      <button type="button" className="h-[22px] w-[130px] bg-linear-to-b from-[#5f5f5f] to-[#505050] pl-[15px] text-left text-[13px] leading-5 text-[#a8a8a8] [clip-path:path('M0_22C8_20_7_0_16_0H120C128_0_124_10_130_22Z')]">
        시작
      </button>
      <div className="-ml-2.5 flex h-[22px] w-[138px] items-center bg-linear-to-b from-[#8a8a8a] to-[#5c5c5c] pr-5 pl-5 [clip-path:path('M0_22C8_20_7_0_16_0H116C128_0_124_18_138_22Z')]">
        <button type="button" className="flex-1 text-left text-xs text-white">Drawing2*</button>
        <button type="button" aria-label="Drawing2 닫기">
          <Svg w={8}><path d="m1 1 6 6M7 1 1 7" stroke="#4a4a4a" strokeWidth="2" /></Svg>
        </button>
      </div>
      <button type="button" aria-label="새 도면" className="mb-[3px] flex h-3.5 w-[22px] items-center justify-center rounded-tr-lg rounded-bl-lg bg-[#5c5c5c]">
        <Svg w={8}><path d="M4 0v8M0 4h8" stroke="#d0d0d0" strokeWidth="2" /></Svg>
      </button>
    </div>
  )
}

/* ---------- drawing area ---------- */

const ORIGIN = { x: 516, y: 608 }
const STEP = 67.3 / 5

function Grid() {
  const lines = []
  for (let i = -45; i <= 120; i++) {
    const p = Math.round(ORIGIN.x + i * STEP) + 0.5
    if (p > 0) lines.push({ key: `v${i}`, major: i % 5 === 0, d: `M${p} 0V2000` })
  }
  for (let i = -50; i <= 45; i++) {
    const p = Math.round(ORIGIN.y + i * STEP) + 0.5
    if (p > 0) lines.push({ key: `h${i}`, major: i % 5 === 0, d: `M0 ${p}H4000` })
  }
  // minor lines first so that the major ones stay on top
  lines.sort((a, b) => a.major - b.major)
  return lines.map((l) => <path key={l.key} d={l.d} stroke={l.major ? '#30374a' : '#272e39'} />)
}

function Model() {
  return (
    <svg className="absolute inset-0 h-full w-full" fill="none" aria-label="모형 공간">
      <g shapeRendering="crispEdges">
        <Grid />
        <path d="M516.500 0V559" stroke="#1f6b25" />
        <path d="M567 608.500H4000" stroke="#5c2830" />
      </g>
      <g stroke="#fff" shapeRendering="crispEdges">
        <path d="M661 263.500 680.500 87.500 902.500 102.500 926 246" />
        <path d="M617 533 1120.500 214.500V518" />
        <path d="M878 246.500H975M926.500 198V295" />
        <path d="M516.500 559V609.500H567M512.500 604.500h9v9h-9z" />
        <path d="M518 542l6.500 6.500L531 542M524.500 548v7M571 595l13 13M584 595l-13 13" />
      </g>
      <path d="M898 102.500h11M902.500 97v11" stroke="#5d666b" />
    </svg>
  )
}

function DynamicInput() {
  return (
    <div className="absolute top-[263px] left-[942px] flex items-start gap-[3px] text-[13px] leading-4 text-black">
      <label htmlFor="distance" className="flex h-[23px] w-[135px] items-start border border-black bg-[#999] pl-[5px]">
        다음 점 지정 또는
        <span className="mt-1.5 mr-[3px] ml-auto flex size-[11px] items-center justify-center border border-[#2a2aa0] bg-[#dcdcdc]">
          <Svg w={7}><path d="M3.500 0v5M1 2.500h5M1 6.500h5" stroke="#222" /></Svg>
        </span>
      </label>
      <span className="flex h-5 w-[66px] items-center border border-black bg-white pl-1">
        <input id="distance" readOnly value="108.3408" className="h-[15px] w-[53px] bg-[#0078d7] text-xs text-white outline-none" />
      </span>
      <span className="flex h-5 w-[52px] items-center border border-black bg-[#999] pl-1.5 text-xs">&lt; 279°</span>
    </div>
  )
}

function ViewCube() {
  return (
    <div className="absolute top-10 right-[17px] flex flex-col items-center">
      <div className="relative grid h-[132px] w-[132px] grid-cols-[18px_1fr_18px] grid-rows-[18px_1fr_18px] place-items-center text-lg leading-none text-[#a5a6a8]">
        <div className="absolute inset-1.5 rounded-full border-[12px] border-[#454a54]" />
        <span className="relative col-start-2">북</span>
        <span className="relative col-start-1 row-start-2">서</span>
        <button type="button" className="relative col-start-2 row-start-2 flex size-[52px] items-center justify-center border border-[#8b8b8b] bg-[#b3b4b5] text-[13px] text-[#4a4f57]">
          <span className="flex size-8 items-center justify-center bg-[#a3a9af] whitespace-nowrap">평면도</span>
        </button>
        <span className="relative col-start-3 row-start-2">동</span>
        <span className="relative col-start-2 row-start-3">남</span>
      </div>
      <button type="button" className="mt-5 flex h-[18px] w-12 items-center gap-1 rounded-sm border border-[#8d8f9c] bg-[#9a9cab] pl-1 font-['Liberation_Sans',sans-serif] text-[11px] text-[#4c4f58]">
        WCS
        <Svg w={9} h={6}><path d="M.5.5h8l-4 4.500z" stroke="#c9cad2" /></Svg>
      </button>
    </div>
  )
}

function NavBar() {
  const dark = '#3b4046'
  return (
    <div className="absolute top-[236px] right-1 flex h-[212px] w-8 flex-col items-center rounded-sm border border-[#6a6e72] bg-[#5b6065]">
      <button type="button" aria-label="탐색 막대 닫기" className="self-end pr-0.5">
        <Svg w={9}><circle cx="4.500" cy="4.500" r="4" fill="#4a4f54" /><path d="m3 3 3 3M6 3 3 6" stroke="#777" /></Svg>
      </button>
      <button type="button" aria-label="탐색 휠" className="mt-2 flex flex-col items-center gap-1.5">
        <Svg w={24}><path d="M12 1.500h10.500V12A10.500 10.500 0 1 1 12 1.500z" stroke={dark} /><circle cx="12" cy="12" r="6" stroke={dark} /><path d="m5 19 3-3M19 19l-3-3" stroke={dark} /></Svg>
        <Caret color={dark} />
      </button>
      <hr className="mt-1 w-[26px] border-[#6d7175]" />
      <button type="button" aria-label="초점이동" className="mt-1">
        <Svg w={24}><path d="M7 23 1 12c-1-2 1-2 2-1l4 4L5.500 4c0-2 2-2 2.500 0l1.500 7V2c0-2 3-2 3 0v9l2-8c.5-2 3-1 2.500.5L16 12l3.500-6c1-1.500 3-.5 2 1L19 16l-2 7z" stroke={dark} /></Svg>
      </button>
      <button type="button" aria-label="줌" className="mt-1 flex flex-col items-center gap-1.5">
        <Svg w={24}><path d="m1 1 14 14M16 1 1 16M1 5V1h4M12 1h4v4M1 12v4h4" stroke={dark} /><circle cx="17" cy="16" r="4.500" stroke={dark} strokeWidth="1.500" /><path d="m20 19 4 4" stroke={dark} strokeWidth="2.500" /></Svg>
        <Caret color={dark} />
      </button>
      <button type="button" aria-label="궤도" className="mt-1 flex flex-col items-center gap-1.5">
        <Svg w={24}><path d="m12 1 4 5h-2v17h-4V6H8z" stroke={dark} /><path d="M9 10c-10 1-11 6-3 7M15 10c11 1 11 7 0 7" stroke={dark} /><path d="m8 14-5 3 5 3z" fill={dark} /></Svg>
        <Caret color={dark} />
      </button>
      <hr className="mt-1 w-[26px] border-[#6d7175]" />
      <button type="button" aria-label="쇼모션" className="mt-1">
        <Svg w={24}><path d="M.5.500h6v6h-6zM8.500.500h6v6h-6zM16.500.500h6v6h-6zM.5 9.500h16v13H.5z" stroke={dark} /><path d="m5 12 7 4-7 4z" fill={dark} /></Svg>
      </button>
      <button type="button" aria-label="탐색 막대 메뉴" className="mt-auto self-end pr-0.5 pb-px">
        <Svg w={9}><circle cx="4.500" cy="4.500" r="4" fill="#4a4f54" /><path d="M2.500 4.500h4" stroke="#777" /></Svg>
      </button>
    </div>
  )
}

/* ---------- command window ---------- */

const LOG = [
  'LINE',
  '첫 번째 점 지정:',
  '다음 점 지정 또는 [명령 취소(U)]:',
  '다음 점 지정 또는 [명령 취소(U)]:',
  '다음 점 지정 또는 [닫기(C)/명령 취소(U)]: *취소*',
  '명령: 반대 구석 지정 또는 [울타리(F)/윈도우폴리곤(WP)/걸침폴리곤(CP)]: *취소*',
  '명령: 반대 구석 지정 또는 [울타리(F)/윈도우폴리곤(WP)/걸침폴리곤(CP)]:',
  '걸치기(C) 올가미  스페이스바를 눌러 옵션 순환',
  '명령: _.erase 2개를 찾음',
  '명령: L',
  'LINE',
  '첫 번째 점 지정:',
  '다음 점 지정 또는 [명령 취소(U)]:',
  '다음 점 지정 또는 [명령 취소(U)]:',
]

// Hangul runs are set a little larger than the Latin ones
function Mono({ children }) {
  return children.split(/([가-힣]+)/).map((run, i) => (
    <span key={i} className={i % 2 ? 'text-sm leading-[15px]' : ''}>{run}</span>
  ))
}

function CommandWindow() {
  const [value, setValue] = useState('c')
  return (
    <div className="absolute right-[384px] bottom-0 left-[384px] flex border border-[#777] bg-[#c8c8c8] font-['DejaVu_Sans_Mono','Noto_Sans_CJK_KR',monospace] text-xs leading-[15px] whitespace-pre text-[#111]">
      <div className="flex w-[22px] shrink-0 flex-col items-center gap-1.5 border-r border-[#666] bg-linear-to-b from-[#909090] to-[#333] pt-1">
        <Svg w={18} h={5}><path d="M0 1h18M0 4h18" stroke="#b5b5b5" strokeWidth="2" strokeDasharray="2 1" /></Svg>
        <button type="button" aria-label="명령 창 닫기">
          <Svg w={10}><path d="m1 1 8 8M9 1 1 9" stroke="#f3f3f3" strokeWidth="2" /></Svg>
        </button>
        <button type="button" aria-label="사용자화" className="mt-1">
          <Svg w={14}><path d="M2 1 5 4 4 5 1 3C0 6 3 8 5 7l6 6c2 1 3-1 2-2L7 5c1-3-2-5-5-4z" fill="#eceef2" stroke="#444" strokeWidth=".6" /></Svg>
        </button>
      </div>
      <div className="min-w-0 flex-1">
        <div role="log" className="overflow-hidden border-b border-[#777] pt-0.5 pb-[3px] pl-0.5">
          {LOG.map((line, i) => (
            <p key={i} className="h-[15px]"><Mono>{line}</Mono></p>
          ))}
        </div>
        <div className="flex h-[21px] items-center bg-white pl-[3px]">
          <Svg w={18} h={18}><rect x="13.500" y="1.500" width="2" height="2" stroke="#8ab8ea" /><rect x="1.500" y="14.500" width="2" height="2" stroke="#8ab8ea" /></Svg>
          <button type="button" aria-label="최근 명령" className="ml-px flex w-3.5 items-center"><Caret color="#888" /></button>
          <label htmlFor="command" className="flex items-center">
            <b className="mr-1">LINE</b>
            <span><Mono>{'다음 점 지정 또는 ['}</Mono></span>
          </label>
          <button type="button" className="h-[17px] rounded-sm bg-[#d4d4d4]"><Mono>닫기</Mono>(<span className="text-blue-700">C</span>)</button>
          <button type="button" className="ml-1 h-[17px] rounded-sm bg-[#d4d4d4]"><Mono>명령 취소</Mono>(<span className="text-blue-700">U</span>)</button>
          <span>]: </span>
          <input id="command" value={value} onChange={(e) => setValue(e.target.value)} className="h-5 min-w-0 flex-1 pl-1 outline-none" />
          <button type="button" aria-label="기록 펼치기" className="mr-1">
            <Svg w={8} h={5}><path d="M0 4.500h8L4 0z" fill="#111" /></Svg>
          </button>
        </div>
      </div>
    </div>
  )
}

function Canvas() {
  return (
    <main className="relative min-h-0 flex-1 overflow-hidden bg-[#212830]">
      <Model />
      <div className="absolute top-1 left-[3px] flex text-[13px] leading-[18px] text-[#eee]">
        <button type="button">[−]</button>
        <button type="button">[평면도]</button>
        <button type="button">[2D 와이어프레임]</button>
      </div>
      <div className="absolute top-2 right-3 flex gap-2.5">
        <button type="button" aria-label="뷰포트 최소화"><Svg w={10} h={12}><path d="M0 9h10" stroke="#fff" strokeWidth="3" /></Svg></button>
        <button type="button" aria-label="뷰포트 복원"><Svg w={10} h={12}><path d="M1 4h6v6H1zM3 1.500h6.500V8" stroke="#fff" strokeWidth="2" /></Svg></button>
        <button type="button" aria-label="뷰포트 닫기"><Svg w={10} h={12}><path d="m1 2 8 8M9 2l-8 8" stroke="#fff" strokeWidth="2.500" /></Svg></button>
      </div>
      <ViewCube />
      <NavBar />
      <DynamicInput />
      <CommandWindow />
    </main>
  )
}

/* ---------- bottom bar ---------- */

function LayoutTabs() {
  return (
    <div className="flex items-start pl-2.5 text-[13px] leading-[15px]">
      <button type="button" className="relative z-10 h-[17px] w-[50px] bg-linear-to-b from-[#585858] to-[#8a8a8a] pb-0.5 font-bold text-white [clip-path:path('M0_0C8_2_6_17_14_17H38C46_17_44_2_50_0Z')]">모형</button>
      <button type="button" className="-ml-1 h-[17px] w-[58px] bg-linear-to-b from-[#505050] to-[#666] pb-0.5 text-[#aaa] [clip-path:path('M4_0C8_2_8_17_14_17H46C54_17_50_2_58_0Z')]">배치1</button>
      <button type="button" className="-ml-1 h-[17px] w-[58px] bg-linear-to-b from-[#505050] to-[#666] pb-0.5 text-[#aaa] [clip-path:path('M4_0C8_2_8_17_14_17H46C54_17_50_2_58_0Z')]">배치2</button>
      <button type="button" aria-label="새 배치" className="ml-[3px] flex h-4 w-[22px] items-center justify-center rounded-tl-lg rounded-br-lg bg-[#585858]">
        <Svg w={8}><path d="M4 0v8M0 4h8" stroke="#ccc" strokeWidth="2" /></Svg>
      </button>
    </div>
  )
}

const BLUE = '#2f9bff'
const GREY = '#bdbdbd'

const StatusIcons = {
  grid: <Svg><path d="M2.500 0v16M5.500 0v16M8.500 0v16M11.500 0v16M14 0v16M0 3.500h16M0 7.500h16M0 11.500h16" stroke={BLUE} /></Svg>,
  snap: <Svg>{[1, 4, 7, 10, 13].map((y) => <path key={y} d={`M1 ${y + 0.5}h14`} stroke={GREY} strokeDasharray="1 2" />)}</Svg>,
  ortho: <Svg><path d="M2 2v12h13M2 9h5v5" stroke={GREY} strokeWidth="1.300" /></Svg>,
  polar: <Svg><path d="M14 8.500A6.500 6.500 0 1 1 11 2.500M7.500 8.500H16M7.500 8.500 13 3" stroke={BLUE} strokeWidth="1.500" /></Svg>,
  iso: <Svg w={18} h={20}><path d="M9 0v20M1 1l16 18" stroke={GREY} strokeWidth="1.200" /></Svg>,
  track: <Svg><path d="M14 2 1 14.500h14.500" stroke={BLUE} strokeWidth="1.500" /><path d="M8 6.500 10 9l-3 1z" fill={BLUE} stroke={BLUE} /></Svg>,
  osnap: <Svg><rect x="3" y="3" width="12" height="12" stroke={BLUE} strokeWidth="1.500" /><rect x=".5" y=".5" width="5" height="5" fill="#25c128" stroke="#0a3f0c" /></Svg>,
  annVis: <Svg w={18}><path d="M8 0 6 8l-6 8h5l3-3 3 3h5l-6-8z" fill={BLUE} /><circle cx="12.500" cy="4" r="3" stroke={BLUE} strokeWidth="1.500" /></Svg>,
  annAuto: <Svg w={18}><path d="M8 0 6 8l-6 8h5l3-3 3 3h5l-6-8z" fill={GREY} /><path d="m15 1-4 4h4l-3 4" stroke={GREY} /></Svg>,
  annScale: <Svg><path d="M8 0 6 8l-6 8h5l3-3 3 3h5l-6-8z" fill={GREY} /></Svg>,
  plus: <Svg w={14}><path d="M7 0v14M0 7h14" stroke="#d6d6d6" strokeWidth="2" /></Svg>,
  isolate: <Svg><rect x="1" y="1" width="6" height="6" stroke={GREY} strokeWidth="1.200" /><circle cx="12.500" cy="6.500" r="3" stroke={GREY} strokeWidth="1.200" /><path d="M7 9.500 3.500 15h7z" stroke={GREY} strokeWidth="1.200" /></Svg>,
  perf: <Svg w={18}><circle cx="9" cy="9" r="7.500" fill="#0a4f9e" stroke={BLUE} strokeWidth="1.500" /><path d="m8 12 4-4" stroke={BLUE} strokeWidth="1.500" /></Svg>,
  full: <Svg><path d="M.5 2.500h15v12H.5z" stroke="#d6d6d6" strokeWidth="1.300" /><path d="M9 5h4v4zM3 8v4h4z" fill="#d6d6d6" /></Svg>,
  menu: <Svg><path d="M1 3h14M1 8h14M1 13h14" stroke="#d6d6d6" strokeWidth="2" /></Svg>,
}

function StatusButton({ label, children }) {
  return <button type="button" aria-label={label} className="flex w-6 items-center justify-center">{children}</button>
}

function StatusMenu({ label }) {
  return <button type="button" aria-label={label} className="flex w-3.5 items-center justify-center"><Caret big color="#f2f2f2" /></button>
}

function StatusGroup({ children }) {
  return <div className="flex border border-[#7b7b7b] bg-[#505050]">{children}</div>
}

function StatusBar() {
  return (
    <div className="flex h-7 gap-0.5 pb-0.5 text-white">
      <StatusGroup><button type="button" className="w-6 pb-0.5 text-[13px] leading-5 whitespace-nowrap">모형</button></StatusGroup>
      <StatusGroup>
        <StatusButton label="그리드">{StatusIcons.grid}</StatusButton>
        <StatusButton label="스냅">{StatusIcons.snap}</StatusButton>
        <StatusMenu label="스냅 설정" />
      </StatusGroup>
      <StatusGroup>
        <StatusButton label="직교">{StatusIcons.ortho}</StatusButton>
        <StatusButton label="극좌표 추적">{StatusIcons.polar}</StatusButton>
        <StatusMenu label="극좌표 설정" />
        <StatusButton label="등각투영">{StatusIcons.iso}</StatusButton>
        <StatusMenu label="등각평면" />
        <span className="w-px bg-[#7b7b7b]" />
        <StatusButton label="객체 스냅 추적">{StatusIcons.track}</StatusButton>
        <StatusButton label="객체 스냅">{StatusIcons.osnap}</StatusButton>
        <StatusMenu label="객체 스냅 설정" />
      </StatusGroup>
      <StatusGroup>
        <StatusButton label="주석 가시성">{StatusIcons.annVis}</StatusButton>
        <StatusButton label="자동 축척">{StatusIcons.annAuto}</StatusButton>
        <StatusButton label="주석 축척">{StatusIcons.annScale}</StatusButton>
        <button type="button" className="w-[18px] text-right text-[11px]">1:1</button>
        <StatusMenu label="축척 목록" />
      </StatusGroup>
      <StatusGroup>
        <StatusButton label="작업공간 전환"><Gear size={13} color="#bdbdbd" hole="#505050" /></StatusButton>
        <StatusMenu label="작업공간 목록" />
        <span className="w-px bg-[#7b7b7b]" />
        <StatusButton label="주석 모니터">{StatusIcons.plus}</StatusButton>
      </StatusGroup>
      <StatusGroup><StatusButton label="객체 분리">{StatusIcons.isolate}</StatusButton></StatusGroup>
      <StatusGroup><StatusButton label="하드웨어 가속">{StatusIcons.perf}</StatusButton></StatusGroup>
      <StatusGroup>
        <StatusButton label="화면 정리">{StatusIcons.full}</StatusButton>
        <StatusButton label="사용자화">{StatusIcons.menu}</StatusButton>
      </StatusGroup>
    </div>
  )
}

// strip of the window that sits behind, left of the main one
function BackWindow() {
  return (
    <div className="flex w-2 shrink-0 flex-col overflow-hidden">
      <div className="h-[5px] bg-[#001a38]" />
      <div className="flex h-[43px] items-center bg-[#3b4046] pb-3">
        <Svg w={6} h={10}><path d="M5 0 0 5l5 5" stroke="#8a8f95" /></Svg>
      </div>
      <div className="flex h-[37px] items-center bg-[#292a2f]">
        <Svg w={4} h={14}><path d="M1.500 0v3M1.500 5.500v3M1.500 11v3" stroke="#f4f4f4" strokeWidth="3" /></Svg>
      </div>
      <div className="h-[72px] border-b border-[#e4e4e4] bg-white" />
      <div className="flex-1 bg-white" />
      <div className="h-11 border-t-4 border-r-2 border-t-[#0a2547] border-r-[#05080d] bg-[#0a0d13]" />
    </div>
  )
}

export default function App() {
  return (
    <div className="flex h-screen bg-white py-2 pr-2 font-['Open_Sans','Noto_Sans_CJK_KR',sans-serif]">
      <Defs />
      <BackWindow />
      <div className="flex min-w-0 flex-1 flex-col">
        <Header />
        <Ribbon />
        <FileTabs />
        <Canvas />
        <footer className="flex h-[29px] shrink-0 justify-between border-t border-[#666] bg-[#383838]">
          <LayoutTabs />
          <StatusBar />
        </footer>
      </div>
    </div>
  )
}
